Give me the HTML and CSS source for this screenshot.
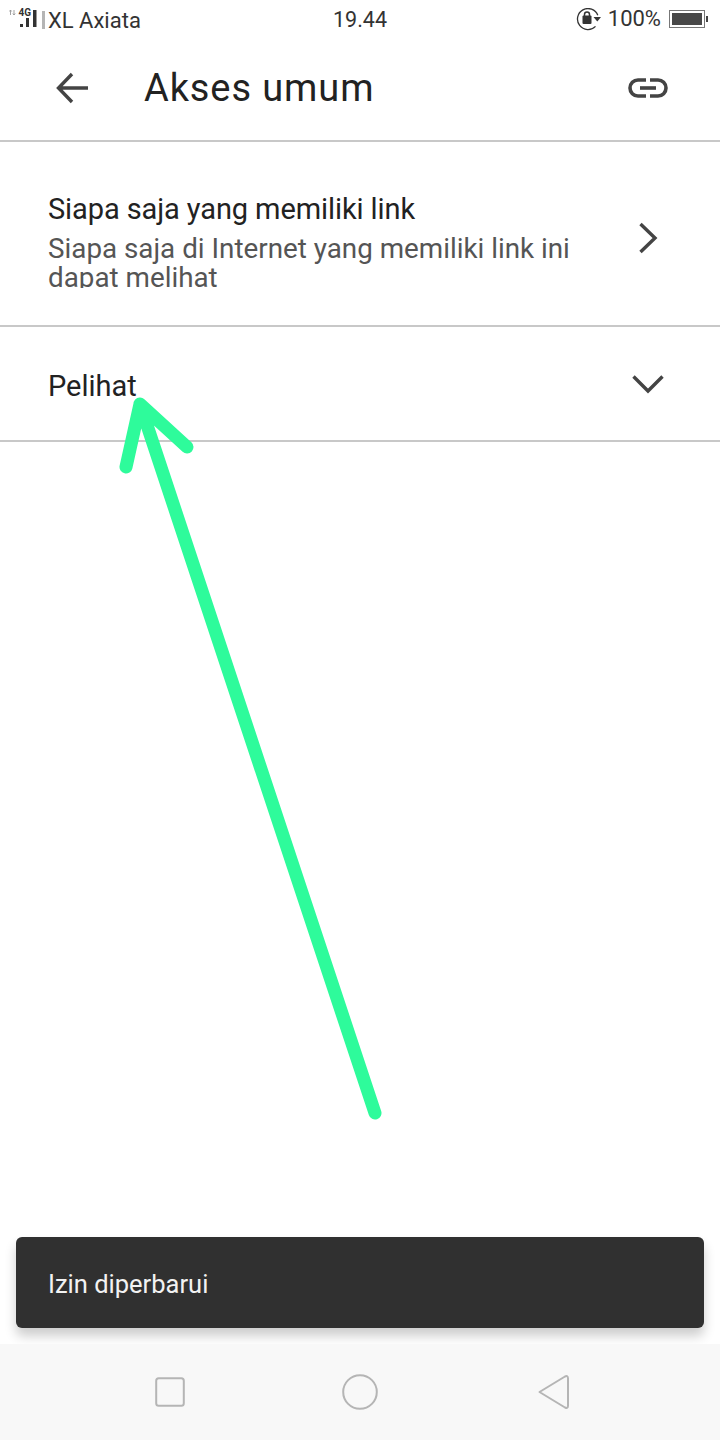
FILE: index.html
```html
<!DOCTYPE html>
<html lang="en">

<head>
  <meta charset="UTF-8">
  <meta name="viewport" content="width=device-width, initial-scale=1.0">
  <title>Akses umum</title>
  <link rel="stylesheet" href="styles.css">
</head>

<body>
  <div class="phone">
    <div class="status-bar">
      <div class="status-left">
        <svg class="signal" width="30" height="24" viewBox="0 0 30 24">
          <path d="M1.500 7V2M0.300 3.500 1.500 2l1.200 1.500M5 2v5M3.800 5.500 5 7l1.200-1.500" fill="none" stroke="#999" stroke-width="0.900" />
          <text x="9.500" y="7.500" class="net-label">4G</text>
          <rect x="11" y="16" width="3" height="3" fill="#333" />
          <rect x="17" y="10" width="3" height="9" fill="#333" />
          <rect x="24" y="2" width="3.500" height="17" fill="#333" />
        </svg>
        <span class="sim-bar"></span>
        <span class="carrier">XL Axiata</span>
      </div>
      <div class="status-time">19.44</div>
      <div class="status-right">
        <svg width="26" height="24" viewBox="0 0 26 24">
          <path d="M21.800 7.300A10.500 10.500 0 1 0 19.500 18.400" fill="none" stroke="#333" stroke-width="1.300" />
          <path d="M17.500 9h7.500l-3.700 4.500z" fill="#333" />
          <rect x="6.500" y="7.500" width="9" height="8.500" rx="1" fill="#333" />
          <path d="M8.500 8V6.500a2.500 2.500 0 0 1 5 0V8" fill="none" stroke="#333" stroke-width="1.500" />
        </svg>
        <span class="battery-text">100%</span>
        <div class="battery">
          <div class="battery-body"><div class="battery-fill"></div></div>
          <div class="battery-tip"></div>
        </div>
      </div>
    </div>

    <header class="toolbar">
      <svg class="back-icon" width="34" height="32" viewBox="0 0 34 32">
        <path d="M32 16H3M16 2 2.500 16 16 30" fill="none" stroke="#444" stroke-width="3.400" />
      </svg>
      <h1 class="toolbar-title">Akses umum</h1>
      <svg class="link-icon" width="42" height="24" viewBox="0 0 42 24">
        <path d="M19 4h-8a8 8 0 0 0 0 16h8M23 4h8a8 8 0 0 1 0 16h-8" fill="none" stroke="#444" stroke-width="3.600" />
        <path d="M13 12h16" fill="none" stroke="#444" stroke-width="3.600" />
      </svg>
    </header>

    <section class="row row-access">
      <div class="row-text">
        <div class="row-title">Siapa saja yang memiliki link</div>
        <div class="row-sub">Siapa saja di Internet yang memiliki link ini dapat melihat</div>
      </div>
      <svg class="chevron-right" width="20" height="32" viewBox="0 0 20 32">
        <path d="M2.500 2 17 16 2.500 30" fill="none" stroke="#444" stroke-width="3.400" />
      </svg>
    </section>

    <section class="row row-role">
      <div class="row-title role-title">Pelihat</div>
      <svg class="chevron-down" width="32" height="20" viewBox="0 0 32 20">
        <path d="M1.500 2.500 16 17 30.500 2.500" fill="none" stroke="#444" stroke-width="3.400" />
      </svg>
    </section>

    <div class="spacer"></div>

    <div class="toast">Izin diperbarui</div>

    <nav class="nav-bar">
      <svg width="30" height="30" viewBox="0 0 30 30">
        <rect x="1.200" y="1.200" width="27.600" height="27.600" rx="2.500" fill="none" stroke="#b5b5b5" stroke-width="2" />
      </svg>
      <svg class="nav-home" width="36" height="36" viewBox="0 0 36 36">
        <circle cx="18" cy="18" r="16.800" fill="none" stroke="#b5b5b5" stroke-width="2" />
      </svg>
      <svg width="32" height="36" viewBox="0 0 32 36">
        <path d="M1.500 18 27 2.500q3-1.500 3 2v27q0 3.500-3 2z" fill="none" stroke="#b5b5b5" stroke-width="2" stroke-linejoin="round" />
      </svg>
    </nav>

    <svg class="annotation" width="720" height="1440" viewBox="0 0 720 1440">
      <path d="M375 1113 140 404M140 404 126 467M140 404 187 447" fill="none" stroke="#2efb9b" stroke-width="13" stroke-linecap="round" stroke-linejoin="round" />
    </svg>
  </div>
</body>

</html>
```

FILE: styles.css
```css
* {
  margin: 0;
  padding: 0;
  box-sizing: border-box;
}

body {
  background: #fff;
  font-family: 'Roboto', sans-serif;
}

.phone {
  position: relative;
  width: 720px;
  height: 1440px;
  display: flex;
  flex-direction: column;
  overflow: hidden;
  background: #fff;
}

.status-bar {
  height: 40px;
  padding: 0 9px;
  display: grid;
  grid-template-columns: 1fr auto 1fr;
  align-items: center;
  color: #333;
}

.status-left {
  display: flex;
  align-items: center;
}

.signal {
  flex: none;
}

.net-label {
  font-family: 'Roboto', sans-serif;
  font-size: 10px;
  font-weight: 700;
  fill: #333;
}

.sim-bar {
  width: 3px;
  height: 18px;
  margin: -1px 3px 0 3px;
  background: #b5b5b5;
}

.carrier {
  font-size: 22px;
  color: #333;
}

.status-time {
  font-size: 21.5px;
  margin-top: -2px;
}

.status-right {
  display: flex;
  align-items: center;
  justify-content: flex-end;
  gap: 6px;
  margin-right: 3px;
}

.battery-text {
  font-size: 22px;
  margin-top: -4px;
}

.battery {
  display: flex;
  align-items: center;
  margin: -3px 0 0 2px;
}

.battery-body {
  width: 36px;
  height: 18px;
  padding: 2px;
  border: 1px solid #777;
}

.battery-fill {
  height: 100%;
  background: #484848;
}

.battery-tip {
  width: 2px;
  height: 6px;
  margin-left: 1px;
  background: #444;
}

.toolbar {
  height: 102px;
  padding: 0 51px 4px 56px;
  display: flex;
  align-items: center;
  border-bottom: 2px solid #c8c8c8;
}

.toolbar-title {
  flex: 1;
  margin-left: 54px;
  font-size: 38px;
  font-weight: 400;
  letter-spacing: 0.9px;
  color: #222;
}

.row {
  display: flex;
  align-items: center;
  justify-content: space-between;
  padding: 0 54px 0 48px;
  border-bottom: 2px solid #c8c8c8;
}

.row-access {
  height: 185px;
}

.row-role {
  height: 115px;
  padding-right: 55px;
}

.row-text {
  width: 530px;
  margin-top: 11px;
}

.row-title {
  font-size: 29px;
  line-height: 36px;
  letter-spacing: -0.1px;
  color: #222;
}

.role-title {
  margin-top: 4px;
  letter-spacing: 0;
}

.row-sub {
  height: 54px;
  margin-top: 7px;
  overflow: hidden;
  font-size: 27.8px;
  line-height: 29px;
  color: #555;
}

.chevron-right {
  margin: 9px 8px 0 0;
}

.chevron-down {
  margin: 0 1px 0 0;
}

.spacer {
  flex: 1;
}

.toast {
  height: 91px;
  margin: 0 16px 16px;
  padding: 2px 0 0 32px;
  display: flex;
  align-items: center;
  border-radius: 6px;
  background: #303030;
  color: #f2f2f2;
  font-size: 25.5px;
  box-shadow: 0 8px 12px rgba(0, 0, 0, 0.2);
}

.nav-bar {
  height: 96px;
  padding: 0 150px 0 155px;
  display: flex;
  align-items: center;
  justify-content: space-between;
  background: #f8f8f8;
  position: relative;
}

.nav-home {
  margin-right: 3px;
}

.annotation {
  position: absolute;
  top: 0;
  left: 0;
}
```
